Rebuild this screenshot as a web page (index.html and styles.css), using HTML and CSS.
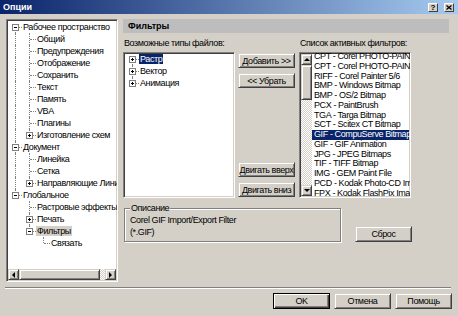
FILE: index.html
```html
<!DOCTYPE html>
<html lang="ru">
<head>
  <meta charset="UTF-8" />
  <title>Опции</title>
  <link rel="stylesheet" href="styles.css">
</head>
<body>
  <div class="titlebar">
    <span class="title">Опции</span>
    <div class="caption-btns">
      <span class="cbtn">?</span>
      <span class="cbtn"><svg width="6" height="5" viewBox="0 0 6 5"><path d="M0.5 0.5 L5.5 4.5 M5.5 0.5 L0.5 4.5" stroke="#000" stroke-width="1.3"/></svg></span>
    </div>
  </div>

  <div class="content">
    <div class="tree">
      <ul class="rows">
        <li class="node"><i class="g f"><b class="box minus"></b></i><span class="lab">Рабочее пространство</span></li>
        <li class="node"><i class="g v"></i><i class="g t"></i><span class="lab">Общий</span></li>
        <li class="node"><i class="g v"></i><i class="g t"></i><span class="lab">Предупреждения</span></li>
        <li class="node"><i class="g v"></i><i class="g t"></i><span class="lab">Отображение</span></li>
        <li class="node"><i class="g v"></i><i class="g t"></i><span class="lab">Сохранить</span></li>
        <li class="node"><i class="g v"></i><i class="g t"></i><span class="lab">Текст</span></li>
        <li class="node"><i class="g v"></i><i class="g t"></i><span class="lab">Память</span></li>
        <li class="node"><i class="g v"></i><i class="g t"></i><span class="lab">VBA</span></li>
        <li class="node"><i class="g v"></i><i class="g t"></i><span class="lab">Плагины</span></li>
        <li class="node"><i class="g v"></i><i class="g l"><b class="box"></b></i><span class="lab">Изготовление схем</span></li>
        <li class="node"><i class="g t"><b class="box minus"></b></i><span class="lab">Документ</span></li>
        <li class="node"><i class="g v"></i><i class="g t"></i><span class="lab">Линейка</span></li>
        <li class="node"><i class="g v"></i><i class="g t"></i><span class="lab">Сетка</span></li>
        <li class="node"><i class="g v"></i><i class="g l"><b class="box"></b></i><span class="lab">Направляющие Линии</span></li>
        <li class="node"><i class="g l"><b class="box minus"></b></i><span class="lab">Глобальное</span></li>
        <li class="node"><i class="g"></i><i class="g t"></i><span class="lab">Растровые эффекты</span></li>
        <li class="node"><i class="g"></i><i class="g t"><b class="box"></b></i><span class="lab">Печать</span></li>
        <li class="node"><i class="g"></i><i class="g l"><b class="box minus"></b></i><span class="lab sel-gray">Фильтры</span></li>
        <li class="node"><i class="g"></i><i class="g"></i><i class="g l"></i><span class="lab">Связать</span></li>
      </ul>
      <div class="hscroll">
        <span class="sb-btn"><i class="arr left"></i></span>
        <span class="thumb"></span>
        <span class="track"></span>
        <span class="sb-btn"><i class="arr right"></i></span>
      </div>
    </div>

    <div class="page">
      <div class="page-head">Фильтры</div>

      <div class="lists">
        <div class="lbl span2">Возможные типы файлов:</div>
        <div class="lbl">Список активных фильтров:</div>

        <div class="listbox types">
          <ul class="rows">
            <li class="node"><i class="g f"><b class="box"></b></i><span class="lab sel-blue">Растр</span></li>
            <li class="node"><i class="g t"><b class="box"></b></i><span class="lab">Вектор</span></li>
            <li class="node"><i class="g l"><b class="box"></b></i><span class="lab">Анимация</span></li>
          </ul>
        </div>

        <div class="btn-col">
          <div class="btn-group">
            <button class="btn">Добавить &gt;&gt;</button>
            <button class="btn">&lt;&lt; Убрать</button>
          </div>
          <div class="btn-group">
            <button class="btn">Двигать вверх</button>
            <button class="btn">Двигать вниз</button>
          </div>
        </div>

        <div class="listbox active">
          <div class="vscroll">
            <span class="sb-btn"><i class="arr up"></i></span>
            <span class="thumb"></span>
            <span class="track"></span>
            <span class="sb-btn"><i class="arr down"></i></span>
          </div>
          <ul class="items">
            <li class="item">CPT - Corel PHOTO-PAINT 9.0 Image</li>
            <li class="item">CPT - Corel PHOTO-PAINT 7/8 Image</li>
            <li class="item">RIFF - Corel Painter 5/6</li>
            <li class="item">BMP - Windows Bitmap</li>
            <li class="item">BMP - OS/2 Bitmap</li>
            <li class="item">PCX - PaintBrush</li>
            <li class="item">TGA - Targa Bitmap</li>
            <li class="item">SCT - Scitex CT Bitmap</li>
            <li class="item sel">GIF - CompuServe Bitmap</li>
            <li class="item">GIF - GIF Animation</li>
            <li class="item">JPG - JPEG Bitmaps</li>
            <li class="item">TIF - TIFF Bitmap</li>
            <li class="item">IMG - GEM Paint File</li>
            <li class="item">PCD - Kodak Photo-CD Image</li>
            <li class="item">FPX - Kodak FlashPix Image</li>
          </ul>
        </div>
      </div>

      <div class="desc-row">
        <fieldset class="desc">
          <legend>Описание</legend>
          Corel GIF Import/Export Filter<br>(*.GIF)
        </fieldset>
        <button class="btn reset">Сброс</button>
      </div>
    </div>
  </div>

  <div class="sep"></div>

  <div class="footer">
    <button class="btn default">OK</button>
    <button class="btn">Отмена</button>
    <button class="btn">Помощь</button>
  </div>
</body>
</html>
```

FILE: styles.css
```css
* {
  box-sizing: border-box;
}
body {
  margin: 0;
  width: 458px;
  height: 316px;
  overflow: hidden;
  background: #d4d0c8;
  font-family: "Liberation Sans", Arial, sans-serif;
  font-size: 9px;
  letter-spacing: -0.4px;
  color: #000;
}
ul {
  list-style: none;
  margin: 0;
  padding: 0;
}

/* title bar */
.titlebar {
  height: 14px;
  display: flex;
  align-items: center;
  justify-content: space-between;
  padding: 0 4px 0 3px;
  background: linear-gradient(to right, #0a246a, #a6caf0);
}
.title {
  color: #fff;
  font-weight: bold;
  letter-spacing: 0;
}
.caption-btns {
  display: flex;
  gap: 6px;
}
.cbtn {
  width: 10px;
  height: 9px;
  display: flex;
  align-items: center;
  justify-content: center;
  background: #d4d0c8;
  border: 1px solid;
  border-color: #fff #404040 #404040 #fff;
  font-weight: bold;
  font-size: 8px;
  line-height: 7px;
  letter-spacing: 0;
}

/* bevels */
.tree, .listbox {
  background: #fff;
  border: 1px solid;
  border-color: #808080 #fff #fff #808080;
  box-shadow: inset 1px 1px #404040, inset -1px -1px #d4d0c8;
  padding: 1px;
}
.btn, .sb-btn, .thumb {
  background: #d4d0c8;
  border: 1px solid;
  border-color: #d4d0c8 #404040 #404040 #d4d0c8;
  box-shadow: inset 1px 1px #fff, inset -1px -1px #808080;
}
.btn {
  font: inherit;
  letter-spacing: inherit;
  color: #000;
  padding: 0;
  height: 16px;
  white-space: nowrap;
  overflow: hidden;
}
.btn.default {
  border-color: #000;
  box-shadow: inset 1px 1px #fff, inset -1px -1px #404040, inset -2px -2px #808080;
}

/* main layout */
.content {
  display: flex;
  margin: 5px 0 0 6px;
  height: 263px;
}
.tree {
  width: 112px;
  display: flex;
  flex-direction: column;
  overflow: hidden;
}
.tree .rows {
  flex: 1;
}

/* tree rows */
.node {
  display: flex;
  height: 12px;
  line-height: 12px;
  white-space: nowrap;
}
.g {
  flex: none;
  width: 14px;
  height: 12px;
  position: relative;
}
.g::before, .g::after {
  content: "";
  position: absolute;
}
.v::before, .t::before {
  left: 7px;
  top: 0;
  bottom: 0;
  border-left: 1px dotted #808080;
}
.l::before {
  left: 7px;
  top: 0;
  height: 6px;
  border-left: 1px dotted #808080;
}
.f::before {
  left: 7px;
  top: 6px;
  bottom: 0;
  border-left: 1px dotted #808080;
}
.t::after, .l::after, .f::after {
  left: 8px;
  right: 0;
  top: 6px;
  border-top: 1px dotted #808080;
}
.box {
  position: absolute;
  left: 4px;
  top: 3px;
  width: 7px;
  height: 7px;
  border: 1px solid #808080;
  background: #fff;
  z-index: 1;
}
.box::before, .box::after {
  content: "";
  position: absolute;
  background: #000;
}
.box::before {
  left: 1px;
  top: 2px;
  width: 3px;
  height: 1px;
}
.box::after {
  left: 2px;
  top: 1px;
  width: 1px;
  height: 3px;
}
.box.minus::after {
  display: none;
}
.lab {
  padding: 0 1px;
}
.sel-gray, .sel-blue {
  align-self: center;
  height: 10px;
  line-height: 10px;
}
.sel-gray {
  background: #d4d0c8;
}
.sel-blue {
  background: #0a246a;
  color: #fff;
}

/* scrollbars */
.hscroll {
  display: flex;
  height: 11px;
  flex: none;
}
.hscroll .sb-btn {
  width: 11px;
}
.hscroll .thumb {
  width: 81px;
}
.sb-btn {
  display: flex;
  align-items: center;
  justify-content: center;
  flex: none;
}
.track {
  flex: 1;
  background: repeating-conic-gradient(#fff 0 25%, #d4d0c8 0 50%) 0 0 / 2px 2px;
}
.arr {
  width: 0;
  height: 0;
  border: 3px solid transparent;
}
.arr.left {
  border-left: 0;
  border-right: 3px solid #000;
}
.arr.right {
  border-right: 0;
  border-left: 3px solid #000;
}
.arr.up {
  border-top: 0;
  border-bottom: 3px solid #000;
}
.arr.down {
  border-bottom: 0;
  border-top: 3px solid #000;
}

/* right page */
.page {
  margin-left: 5px;
  width: 326px;
}
.page-head {
  height: 14px;
  line-height: 14px;
  padding-left: 5px;
  background: #bdbdbd;
  font-weight: bold;
  letter-spacing: 0;
}
.lists {
  display: grid;
  grid-template-columns: 112px 58px 112px;
  column-gap: 3px;
  row-gap: 3px;
  margin-top: 5px;
}
.lbl {
  line-height: 11px;
  padding-left: 1px;
  white-space: nowrap;
}
.span2 {
  grid-column: span 2;
}
.listbox {
  height: 146px;
  overflow: hidden;
}
.types .rows {
  margin-top: -1px;
}
.btn-col {
  display: flex;
  flex-direction: column;
  justify-content: space-between;
  padding: 1px 0;
}
.btn-group {
  display: flex;
  flex-direction: column;
  gap: 5px;
}
.btn-col .btn {
  width: 57px;
  height: 15px;
}
.active {
  display: flex;
}
.vscroll {
  width: 11px;
  flex: none;
  display: flex;
  flex-direction: column;
}
.vscroll .sb-btn {
  height: 11px;
}
.vscroll .thumb {
  height: 35px;
}
.items {
  flex: 1;
  margin-top: -2px;
  min-width: 0;
}
.item {
  height: 9.75px;
  line-height: 9.75px;
  padding-left: 2px;
  white-space: nowrap;
}
.item.sel {
  background: #0a246a;
  color: #fff;
}

/* description */
.desc-row {
  display: flex;
  align-items: flex-end;
  margin-top: 5px;
}
.desc {
  margin: 0 0 0 1px;
  width: 217px;
  height: 39px;
  padding: 1px 4px 0 5px;
  border: 1px solid #808080;
  box-shadow: 1px 1px #fff, inset 1px 1px #fff;
  line-height: 11.5px;
  white-space: nowrap;
  overflow: hidden;
}
.desc legend {
  padding: 0 1px;
  line-height: 11px;
  background: #d4d0c8;
}
.btn.reset {
  margin-left: 14px;
  width: 57px;
}

/* bottom */
.sep {
  margin: 5px 7px 0 5px;
  border-top: 1px solid #808080;
  border-bottom: 1px solid #fff;
}
.footer {
  display: flex;
  justify-content: flex-end;
  gap: 4px;
  margin-top: 4px;
  padding-right: 6px;
}
.footer .btn {
  width: 57px;
}
```
